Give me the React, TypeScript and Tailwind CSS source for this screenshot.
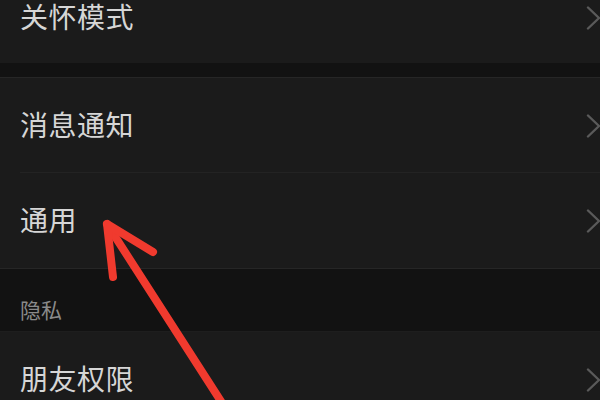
type Row = { label: string; divider?: boolean; first?: boolean };

function Chevron() {
  return (
    <svg className="w-4 h-6 mr-[-2px] shrink-0" viewBox="0 0 16 24" fill="none">
      <polyline
        points="2,1.5 13,12 2,22.5"
        stroke="#5a5a5a"
        strokeWidth="2.4"
        strokeLinecap="round"
        strokeLinejoin="round"
      />
    </svg>
  );
}

function SettingRow({ label, divider, first }: Row) {
  return (
    <div
      className={
        first
          ? "relative h-[91px] bg-[#1b1b1b] flex items-center justify-between pl-5"
          : "relative h-[95px] bg-[#1b1b1b] flex items-center justify-between pl-5"
      }
    >
      <span className="text-[28px] leading-none text-[#d6d6d6] tracking-[0.5px] pb-1">{label}</span>
      <Chevron />
      {divider && <div className="absolute bottom-0 left-5 right-0 h-px bg-[#232323]" />}
    </div>
  );
}

export default function App() {
  return (
    <div
      className="relative w-[600px] h-[400px] overflow-hidden bg-[#111111]"
      style={{ fontFamily: '"Noto Sans CJK SC", "Noto Sans", sans-serif' }}
    >
      <div className="flex flex-col mt-[-28px]">
        <SettingRow label="关怀模式" first />
        <div className="h-[14px] bg-[#121212]" />
        <div className="h-px bg-[#262626]" />
        <SettingRow label="消息通知" divider />
        <SettingRow label="通用" />
        <div className="h-px bg-[#262626]" />
        <div className="h-[62px] bg-[#121212] flex items-center pl-5 pt-[18px]">
          <span className="text-[21px] leading-none text-[#8a8a8a]">隐私</span>
        </div>
        <div className="h-px bg-[#1e1e1e]" />
        <SettingRow label="朋友权限" />
      </div>

      {/* red annotation arrow */}
      <svg className="absolute inset-0 pointer-events-none" width="600" height="400" viewBox="0 0 600 400">
        <g stroke="#f03a2e" strokeWidth="8" strokeLinecap="round" strokeLinejoin="round" fill="none">
          <line x1="107" y1="224" x2="224" y2="406" />
          <polyline points="113,277 107,224 153,252" />
        </g>
      </svg>
    </div>
  );
}
